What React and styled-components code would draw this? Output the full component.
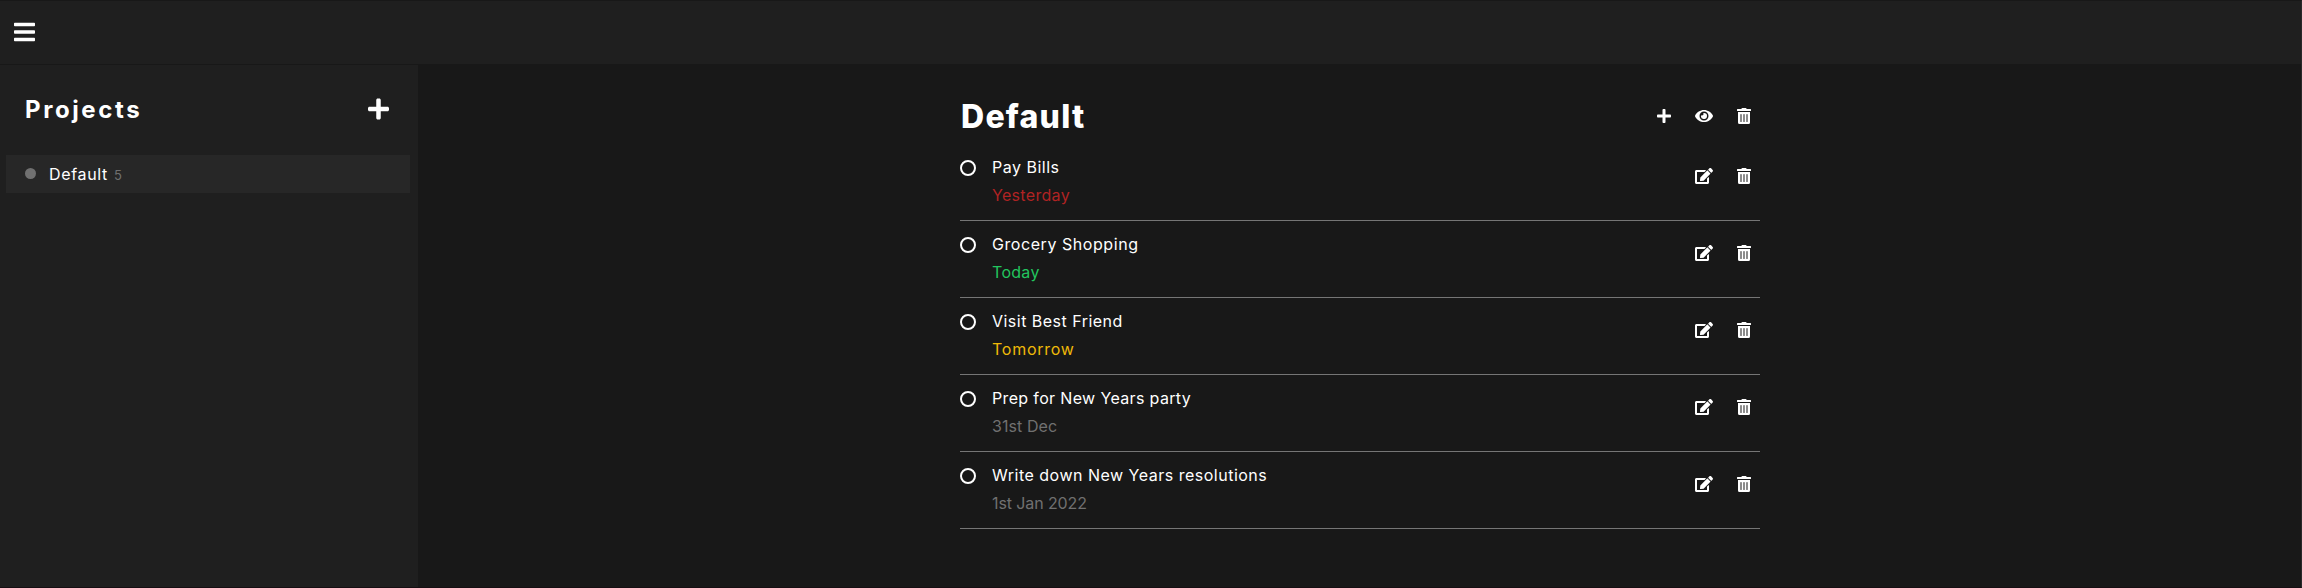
import React from "react";
import styled, { createGlobalStyle } from "styled-components";
import { FaBars, FaPlus, FaEye, FaTrashAlt, FaEdit } from "react-icons/fa";

const muted = "#707070";
const panel = "#1f1f1f";
const canvas = "#181818";

const tasks = [
  { title: "Pay Bills", due: "Yesterday", color: "#b02323", titleSpacing: 0.5, dueSpacing: 0.32 },
  { title: "Grocery Shopping", due: "Today", color: "#22c55e", titleSpacing: 0.56, dueSpacing: 0.3 },
  { title: "Visit Best Friend", due: "Tomorrow", color: "#efb908", titleSpacing: 0.48, dueSpacing: 0.75 },
  { title: "Prep for New Years party", due: "31st Dec", color: muted, titleSpacing: 0.35, dueSpacing: 0.08 },
  { title: "Write down New Years resolutions", due: "1st Jan 2022", color: muted, titleSpacing: 0.5, dueSpacing: -0.1 },
];

const GlobalStyle = createGlobalStyle`
  * { box-sizing: border-box; }
  body {
    margin: 0;
    background: ${canvas};
    color: #fff;
    font-family: Inter, "Liberation Sans", sans-serif;
    font-size: 16px;
    line-height: 20px;
    overflow: hidden;
  }
`;

const Page = styled.div`
  height: 588px;
  display: flex;
  flex-direction: column;
  border-top: 1px solid ${canvas};
  border-right: 1px solid #2a2a2b;
  border-bottom: 1px solid #160e12;
`;

const TopBar = styled.header`
  height: 63px;
  flex: none;
  padding: 0 0 1px 14px;
  display: flex;
  align-items: center;
  background: ${panel};
`;

const Body = styled.div`
  flex: 1;
  display: flex;
  min-height: 0;
`;

const Sidebar = styled.aside`
  width: 418px;
  flex: none;
  padding-top: 29px;
  background: ${panel};
  border-top: 1px solid ${canvas};
`;

const SidebarHeader = styled.div`
  display: flex;
  align-items: center;
  justify-content: space-between;
  height: 30px;
  margin-bottom: 31px;
  padding: 0 29px 0 25px;
`;

const SidebarTitle = styled.h2`
  margin: 0;
  padding-top: 1px;
  font-size: 24px;
  line-height: 30px;
  font-weight: 700;
  letter-spacing: 2.6px;
`;

const ProjectItem = styled.div`
  display: flex;
  align-items: center;
  height: 38px;
  margin: 0 8px 0 6px;
  padding-left: 19px;
  background: #272727;
`;

const Dot = styled.span`
  width: 11px;
  height: 11px;
  margin: 0 12px 2px 0;
  border-radius: 50%;
  background: ${muted};
`;

const ProjectLabel = styled.div`
  display: flex;
  align-items: baseline;
  gap: 6px;
  padding: 1px 0 0 1px;
  letter-spacing: 0.65px;
`;

const Count = styled.span`
  color: ${muted};
  font-size: 13px;
`;

const Main = styled.main`
  flex: 1;
  display: flex;
  justify-content: center;
  padding-top: 32px;
  padding-left: 1px;
`;

const Column = styled.section`
  width: 800px;
`;

const ProjectHeader = styled.div`
  display: flex;
  align-items: center;
  justify-content: space-between;
  height: 40px;
  margin-bottom: 8px;
  padding-right: 9px;
`;

const Title = styled.h1`
  margin: 0;
  padding: 2px 0 0 1px;
  font-size: 32px;
  line-height: 40px;
  font-weight: 800;
  letter-spacing: 1.25px;
`;

const TaskRow = styled.div`
  display: flex;
  height: 77px;
  padding-right: 9px;
  border-bottom: 1px solid #757575;
`;

const Check = styled.span`
  width: 16px;
  height: 16px;
  margin: 16px 16px 0 0;
  border: 2px solid #fff;
  border-radius: 50%;
`;

const TaskText = styled.div`
  flex: 1;
  display: flex;
  flex-direction: column;
  gap: 8px;
  padding-top: 13px;
`;

const TaskLine = styled.span`
  color: ${(p) => p.$color || "#fff"};
  letter-spacing: ${(p) => p.$spacing}px;
`;

const Actions = styled.div`
  display: flex;
  gap: 24px;
  padding-top: ${(p) => p.$top || 0}px;
`;

const IconButton = styled.button`
  display: flex;
  width: ${(p) => p.$w}px;
  height: ${(p) => p.$h || 16}px;
  padding: 0;
  border: 0;
  background: none;
  color: #fff;

  svg {
    width: 100%;
    height: 100%;
  }
`;

export default function App() {
  return (
    <>
      <GlobalStyle />
      <Page>
        <TopBar>
          <IconButton $w={21} $h={24} aria-label="Toggle menu"><FaBars /></IconButton>
        </TopBar>
        <Body>
          <Sidebar>
            <SidebarHeader>
              <SidebarTitle>Projects</SidebarTitle>
              <IconButton $w={21} $h={24} aria-label="Add project"><FaPlus /></IconButton>
            </SidebarHeader>
            <ProjectItem>
              <Dot />
              <ProjectLabel>Default<Count>5</Count></ProjectLabel>
            </ProjectItem>
          </Sidebar>
          <Main>
            <Column>
              <ProjectHeader>
                <Title>Default</Title>
                <Actions>
                  <IconButton $w={14} aria-label="Add task"><FaPlus /></IconButton>
                  <IconButton $w={18} aria-label="Show completed"><FaEye /></IconButton>
                  <IconButton $w={14} aria-label="Delete project"><FaTrashAlt /></IconButton>
                </Actions>
              </ProjectHeader>
              {tasks.map((t) => (
                <TaskRow key={t.title}>
                  <Check />
                  <TaskText>
                    <TaskLine $spacing={t.titleSpacing}>{t.title}</TaskLine>
                    <TaskLine $color={t.color} $spacing={t.dueSpacing}>{t.due}</TaskLine>
                  </TaskText>
                  <Actions $top={24}>
                    <IconButton $w={18} aria-label="Edit task"><FaEdit /></IconButton>
                    <IconButton $w={14} aria-label="Delete task"><FaTrashAlt /></IconButton>
                  </Actions>
                </TaskRow>
              ))}
            </Column>
          </Main>
        </Body>
      </Page>
    </>
  );
}
